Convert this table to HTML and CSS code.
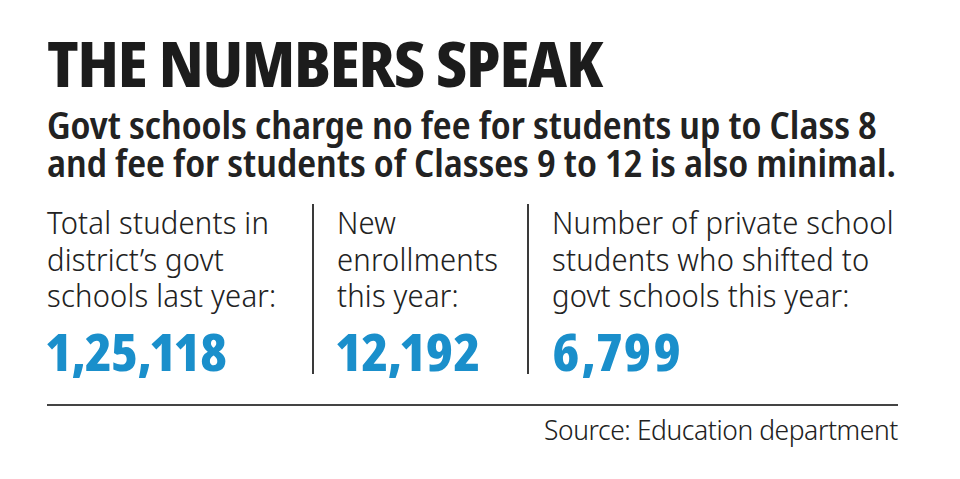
FILE: index.html
```html
<!DOCTYPE html>
<html lang="en">
<head>
<meta charset="utf-8">
<title>The Numbers Speak</title>
<link rel="stylesheet" href="styles.css">
</head>
<body>
<main class="card">
  <h1 class="title">THE NUMBERS SPEAK</h1>
  <p class="subtitle">Govt schools charge no fee for students up to Class 8<br>and fee for students of Classes 9 to 12 is also minimal.</p>
  <section class="stats">
    <div class="stat">
      <p class="label">Total students in<br>district’s govt<br>schools last year:</p>
      <p class="value">1,25,118</p>
    </div>
    <div class="stat stat-divided">
      <p class="label">New<br>enrollments<br>this year:</p>
      <p class="value">12,192</p>
    </div>
    <div class="stat stat-divided">
      <p class="label">Number of private school<br>students who shifted to<br>govt schools this year:</p>
      <p class="value">6,799</p>
    </div>
  </section>
  <hr class="rule">
  <p class="source">Source: Education department</p>
</main>
</body>
</html>
```
FILE: styles.css
```css
html, body {
  margin: 0;
  padding: 0;
  background: #ffffff;
}

body {
  font-family: "Noto Sans Display", "Noto Sans", sans-serif;
  font-stretch: condensed;
  color: #1f1f1f;
}

.card {
  width: 851px;
  padding: 32px 0 0 47px;
}

.title {
  margin: 0;
  font-size: 62px;
  line-height: 62px;
  font-weight: 800;
  letter-spacing: -1.2px;
  color: #1c1c1c;
  white-space: nowrap;
}

.subtitle {
  margin: 12px 0 0;
  font-size: 37px;
  line-height: 38px;
  font-weight: 600;
  color: #222;
  white-space: nowrap;
}

.stats {
  display: grid;
  grid-template-columns: 265px 215px 1fr;
  margin-top: 22px;
}

.stat {
  display: flex;
  flex-direction: column;
}

.stat-divided {
  border-left: 2px solid #3a3a3a;
  padding-left: 23px;
}

.label {
  margin: 0;
  font-size: 31px;
  line-height: 36.5px;
  font-weight: 300;
  font-stretch: 100%;
  letter-spacing: 0.2px;
  color: #222;
  white-space: nowrap;
}

.value {
  margin: 14px 0 0;
  font-size: 51px;
  line-height: 46px;
  font-weight: 800;
  color: #1a8fcb;
  font-variant-numeric: proportional-nums;
}

.stat-divided:last-child .value {
  letter-spacing: 2px;
}

.rule {
  margin: 30px 0 0;
  border: 0;
  height: 2px;
  background: #444;
}

.source {
  margin: 5px 0 0;
  text-align: right;
  font-size: 28px;
  line-height: 36px;
  font-weight: 300;
  font-stretch: 100%;
  letter-spacing: -0.4px;
  color: #222;
}
```
